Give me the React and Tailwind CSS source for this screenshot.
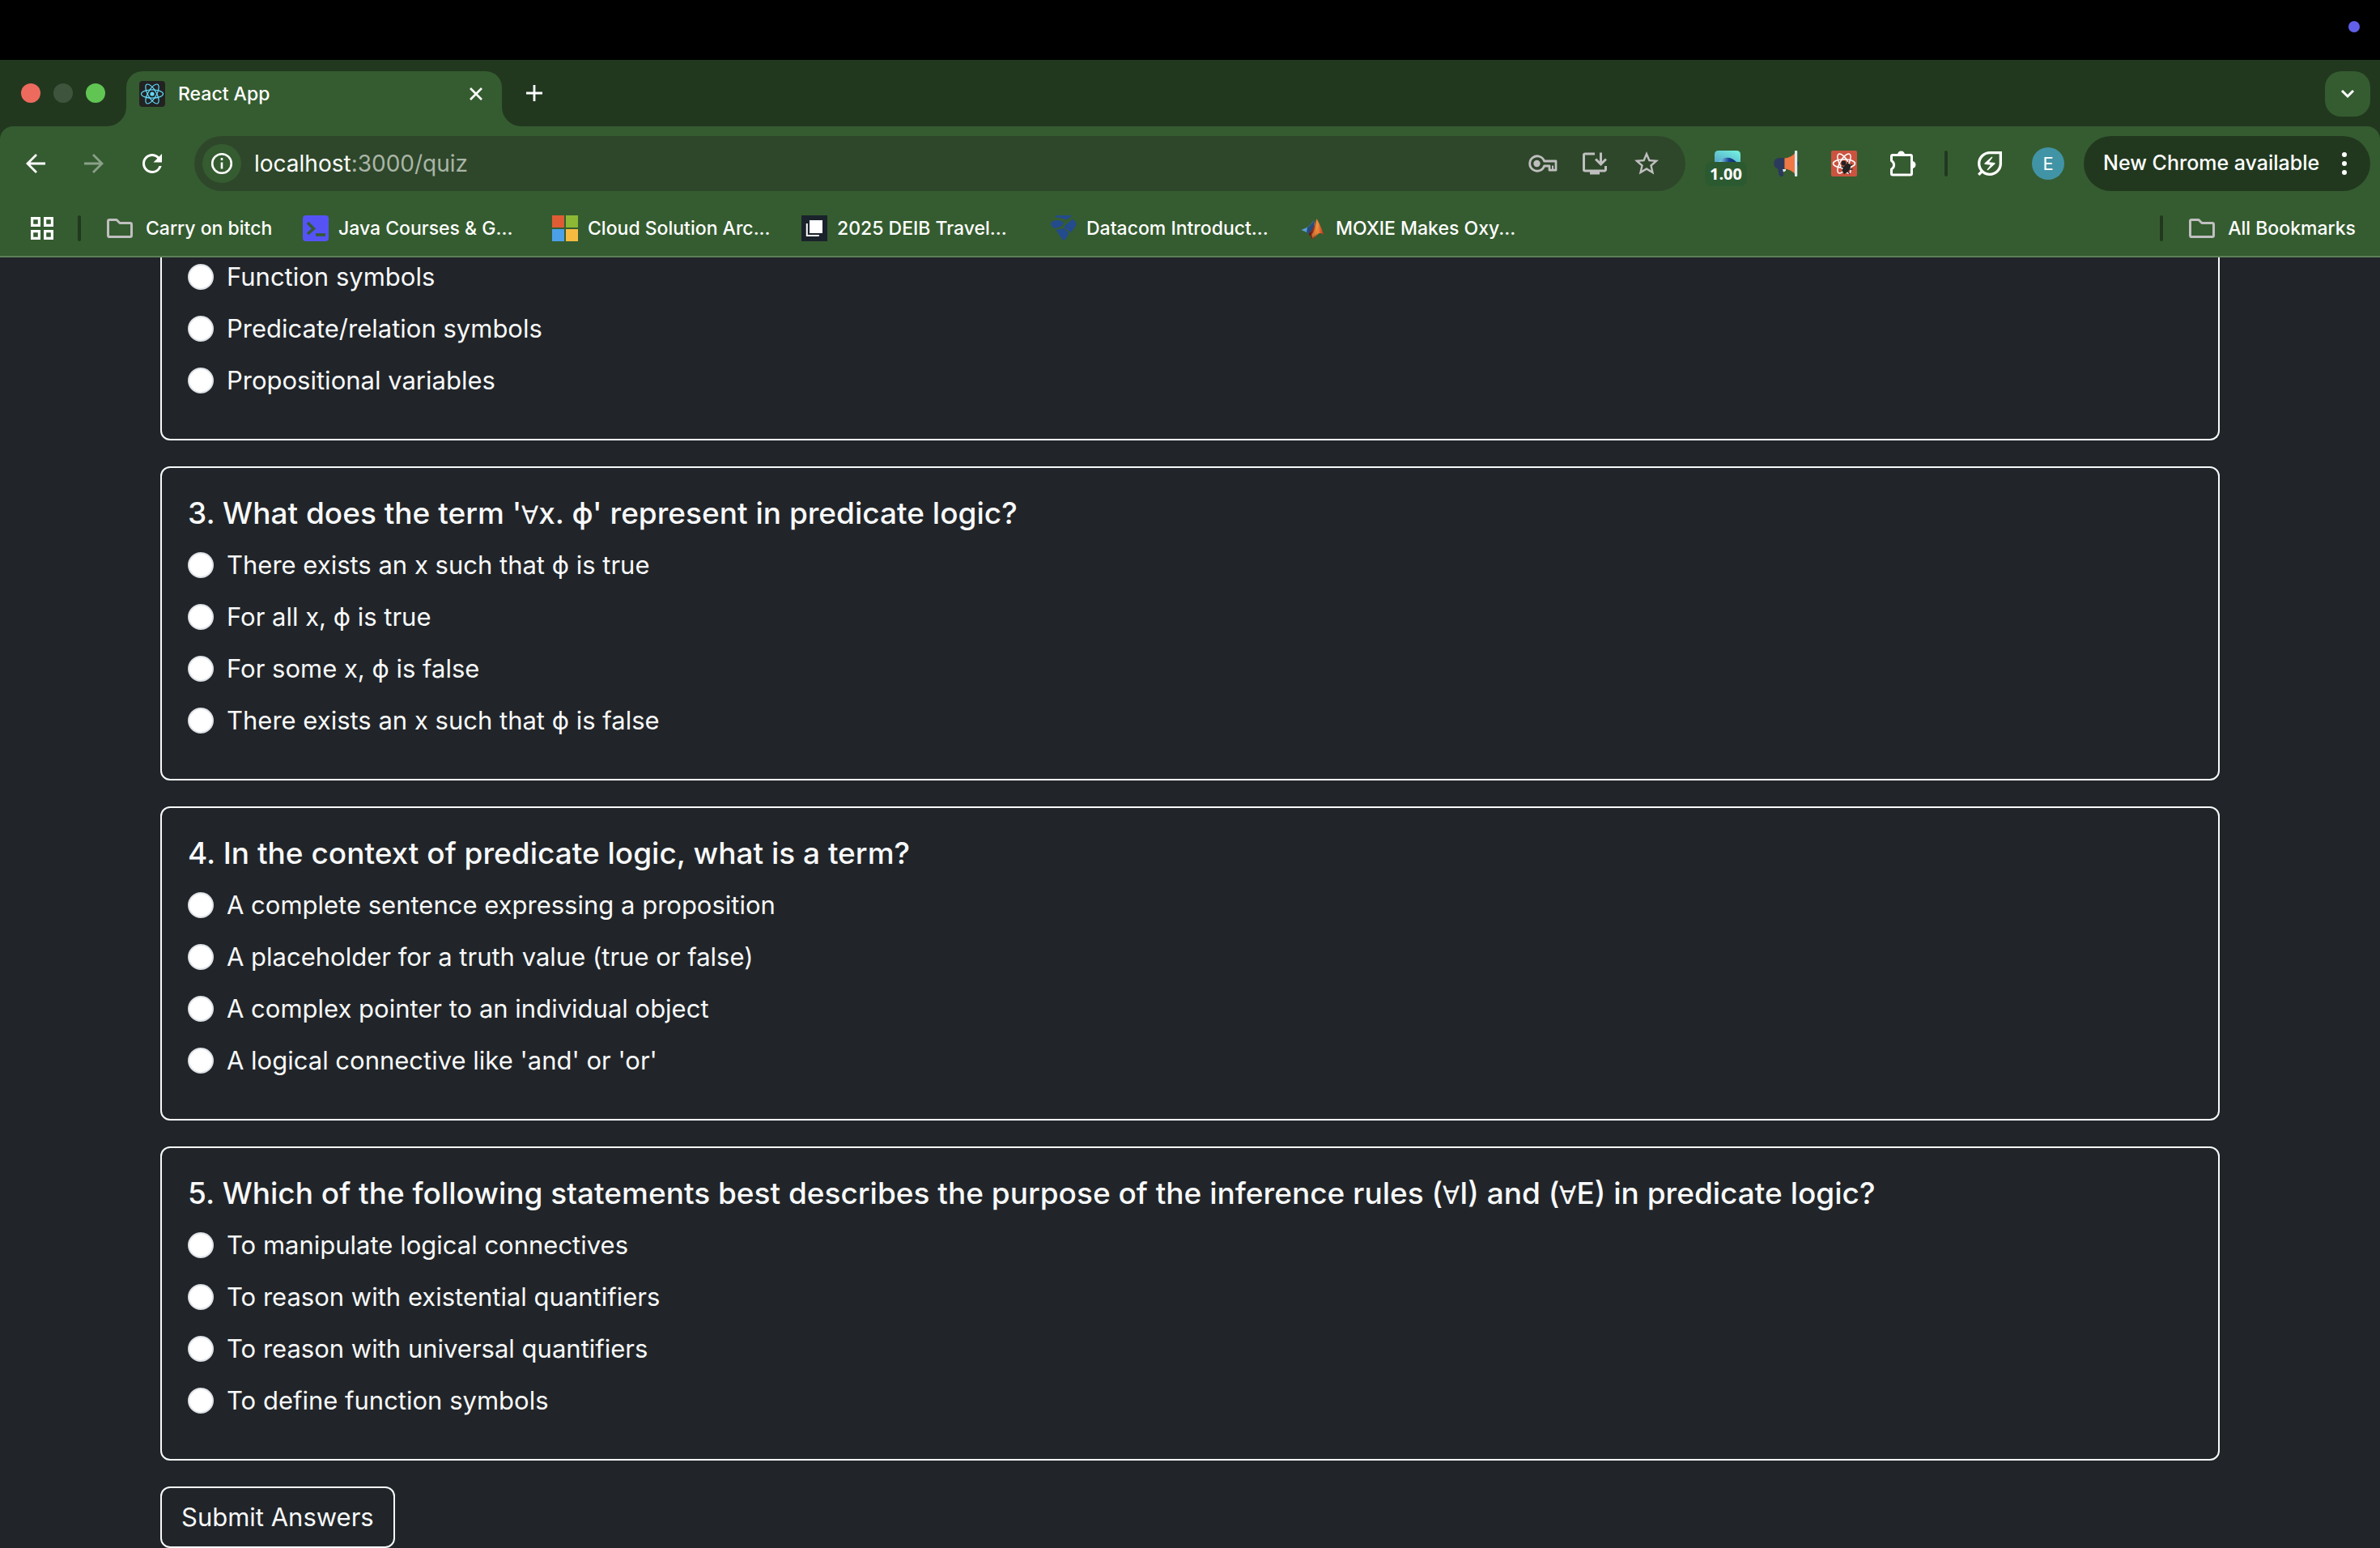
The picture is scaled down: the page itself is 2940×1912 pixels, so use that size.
import { MdRefresh, MdStarBorder, MdInstallDesktop, MdOutlineEnergySavingsLeaf } from "react-icons/md";

function ReactOrbits({ stroke, width }) {
  return (
    <g fill="none" stroke={stroke} strokeWidth={width}>
      <ellipse cx="16" cy="16" rx="13.5" ry="5.2" />
      <ellipse cx="16" cy="16" rx="13.5" ry="5.2" transform="rotate(60 16 16)" />
      <ellipse cx="16" cy="16" rx="13.5" ry="5.2" transform="rotate(120 16 16)" />
    </g>
  );
}

function ReactFavicon() {
  return (
    <svg viewBox="0 0 32 32" className="size-8 shrink-0">
      <rect width="32" height="32" rx="4" fill="#222222" />
      <ReactOrbits stroke="#61dafb" width="1.2" />
      <circle cx="16" cy="16" r="2.6" fill="#61dafb" />
    </svg>
  );
}

function ArrowIcon({ className }) {
  return (
    <svg viewBox="0 0 24 24" className={className} fill="none" stroke="currentColor" strokeWidth="2.8">
      <path d="M24 12H2M13 1L2 12l11 11" />
    </svg>
  );
}

function InfoIcon() {
  return (
    <svg viewBox="0 0 28 28" className="size-7" fill="none" stroke="currentColor" strokeWidth="2.6">
      <circle cx="14" cy="14" r="11.8" />
      <path d="M14 12.5v8M14 7v3" />
    </svg>
  );
}

function KeyIcon() {
  return (
    <svg viewBox="0 0 36 22" className="h-[22px] w-9" fill="none" stroke="currentColor" strokeWidth="2.8">
      <path d="M19.6 8H34v11.2h-8V14h-6.4a9.2 9.2 0 1 1 0-6z" strokeLinejoin="round" />
      <path d="M30 13.5V18" strokeWidth="2" />
      <circle cx="10.5" cy="11" r="4.2" fill="currentColor" stroke="none" />
    </svg>
  );
}

function FolderIcon() {
  return (
    <svg viewBox="0 0 32 24" className="h-6 w-8 shrink-0 text-[#c0bfc0]" fill="none" stroke="currentColor" strokeWidth="3" strokeLinejoin="round">
      <path d="M1.5 3.2Q1.5 1.5 3.2 1.5h8.8l4 4h12.8q1.7 0 1.7 1.7v13.6q0 1.7-1.7 1.7H3.2q-1.7 0-1.7-1.7z" />
    </svg>
  );
}

function AppsIcon() {
  return (
    <svg viewBox="0 0 28 28" className="size-7" fill="none" stroke="currentColor" strokeWidth="3.2">
      <path d="M1.6 1.6h8.8v8.8H1.6zM17.6 1.6h8.8v8.8h-8.8zM1.6 17.6h8.8v8.8H1.6zM17.6 17.6h8.8v8.8h-8.8z" />
    </svg>
  );
}

function PuzzleIcon() {
  return (
    <svg viewBox="0 0 34 34" className="size-[34px]">
      <path
        d="M5 6.5h22q1.5 0 1.5 1.5v21.5q0 1.5-1.5 1.5H5q-1.5 0-1.5-1.5v-5.5a6 6 0 0 0 0-10.5V8q0-1.5 1.5-1.5z"
        fill="none" stroke="currentColor" strokeWidth="3" strokeLinejoin="round"
      />
      <path d="M11 6a4.5 4.5 0 0 1 9 0zM29 14a4.5 4.5 0 0 1 0 9z" fill="currentColor" />
    </svg>
  );
}

function MegaphoneIcon() {
  return (
    <svg viewBox="0 0 32 32" className="size-8">
      <path d="M28 13q4 0 4 3t-4 3z" fill="#2b3a5c" />
      <path d="M14 9H7a7 7 0 0 0-1 13.5L7.5 30q.5 2 2.5 2h1.5q2 0 1.5-3l-.5-6H14z" fill="#2b3a5c" />
      <path d="M12 23h4v2l-3 1.5z" fill="#dfe9ef" />
      <path d="M14.5 9.5Q23 9 28 2v28q-5-7-13.5-7.5z" fill="#f07746" />
      <rect x="27" y="0" width="3.2" height="32" rx="1" fill="#dceaf2" />
    </svg>
  );
}

function ReactDebugIcon() {
  return (
    <svg viewBox="0 0 32 32" className="size-8">
      <rect width="32" height="32" rx="2" fill="#cb5340" />
      <ReactOrbits stroke="#ffffff" width="1.5" />
      <g fill="#222222" stroke="#222222" strokeWidth="1.3">
        <circle cx="15.5" cy="15.5" r="2.3" />
        <ellipse cx="19" cy="22" rx="3.4" ry="6" transform="rotate(35 19 22)" />
        <path d="M12.5 20l4 1M13.5 24.5l3-1M16 29l1.5-3M20 17l1-3M23 19.5l3-2.5M23 23l3.5 0M21 26l2 3" />
      </g>
    </svg>
  );
}

function SpeedIcon() {
  return (
    <svg viewBox="0 0 32 32" className="size-8">
      <defs>
        <linearGradient id="speed-sky" x1="0" y1="1" x2="1" y2="0">
          <stop offset="0" stopColor="#58a8cc" />
          <stop offset="1" stopColor="#74f5df" />
        </linearGradient>
        <linearGradient id="speed-eye" x1="0" y1="0" x2="1" y2="0">
          <stop offset="0" stopColor="#8fe3f4" />
          <stop offset=".6" stopColor="#16408c" />
          <stop offset="1" stopColor="#123070" />
        </linearGradient>
      </defs>
      <path d="M0 14V5q0-5 5-5h22q5 0 5 5v9z" fill="url(#speed-sky)" />
      <path d="M5 14q11-10.5 22 0z" fill="url(#speed-eye)" />
    </svg>
  );
}

function TerminalFavicon() {
  return (
    <svg viewBox="0 0 32 32" className="size-8 shrink-0">
      <rect width="32" height="32" rx="4" fill="#5553f6" />
      <path d="M6 9l7.5 7.5L6 23" fill="none" stroke="#345b30" strokeWidth="3.6" />
      <path d="M16 24h12" stroke="#345b30" strokeWidth="3.6" />
    </svg>
  );
}

function MicrosoftFavicon() {
  return (
    <svg viewBox="0 0 32 32" className="size-8 shrink-0">
      <rect width="15" height="15" fill="#e05c35" />
      <rect x="17" width="15" height="15" fill="#8cb836" />
      <rect y="17" width="15" height="15" fill="#4ba0e8" />
      <rect x="17" y="17" width="15" height="15" fill="#f5bb41" />
    </svg>
  );
}

function PagesFavicon() {
  return (
    <svg viewBox="0 0 32 32" className="size-8 shrink-0">
      <rect width="32" height="32" fill="#1a222b" />
      <rect x="10" y="6" width="16" height="16" fill="#ffffff" />
      <path d="M6.8 10v15h15" fill="none" stroke="#ffffff" strokeWidth="2" />
    </svg>
  );
}

function DatacomFavicon() {
  return (
    <svg viewBox="0 0 32 32" className="size-8 shrink-0" fill="#244b8c">
      <path d="M7 0h20l-7.5 5.5Q13 2.5 5.5 2.5z" />
      <path d="M1 8q8-4 15 .5 0 3-3 5l-7 2.5Q1 16 0 10z" />
      <path d="M17 13l10-8.5q5 3 4.5 8L25 21q-4-3.5-8-4.5z" />
      <path d="M6.5 18l8-2q6 2 8 6.5L18.5 29q-2.5 3-5 0z" />
    </svg>
  );
}

function MatlabFavicon() {
  return (
    <svg viewBox="0 0 32 32" className="size-8 shrink-0">
      <defs>
        <linearGradient id="peak" x1="0" y1="0" x2="1" y2="0">
          <stop offset="0" stopColor="#4a100e" />
          <stop offset=".35" stopColor="#a8341c" />
          <stop offset=".6" stopColor="#f08a3c" />
          <stop offset="1" stopColor="#b52a1c" />
        </linearGradient>
      </defs>
      <path d="M1.5 18l8-3.5Q14 11 17 6l1 6-7 11q-3-2.5-9.5-5z" fill="#5b9bd5" />
      <path d="M9 15q5-3 8-9l.5 8-6.5 9-3-2z" fill="#274b78" />
      <path d="M20.5 4Q25 12 29.5 24q-5-4-9 .5-4 5-6.5 4.5-.5-4-3.5-6 5.5-4 10-19z" fill="url(#peak)" />
      <path d="M20.5 5l1.5 8-2 10-5 5q0-3-1-4 5-6 6.5-19z" fill="#f3b04a" opacity=".5" />
    </svg>
  );
}

const BOOKMARKS = [
  { label: "Java Courses & G...", Icon: TerminalFavicon },
  { label: "Cloud Solution Arc...", Icon: MicrosoftFavicon },
  { label: "2025 DEIB Travel...", Icon: PagesFavicon },
  { label: "Datacom Introduct...", Icon: DatacomFavicon },
  { label: "MOXIE Makes Oxy...", Icon: MatlabFavicon },
];

const QUESTIONS = [
  {
    number: 3,
    text: "What does the term '∀x. ϕ' represent in predicate logic?",
    options: [
      "There exists an x such that ϕ is true",
      "For all x, ϕ is true",
      "For some x, ϕ is false",
      "There exists an x such that ϕ is false",
    ],
  },
  {
    number: 4,
    text: "In the context of predicate logic, what is a term?",
    options: [
      "A complete sentence expressing a proposition",
      "A placeholder for a truth value (true or false)",
      "A complex pointer to an individual object",
      "A logical connective like 'and' or 'or'",
    ],
  },
  {
    number: 5,
    text: "Which of the following statements best describes the purpose of the inference rules (∀I) and (∀E) in predicate logic?",
    options: [
      "To manipulate logical connectives",
      "To reason with existential quantifiers",
      "To reason with universal quantifiers",
      "To define function symbols",
    ],
  },
];

function TabStrip() {
  return (
    <div className="flex items-start bg-[#21381f] pt-[14px] pr-3 pl-[26px]">
      <div className="flex h-[54px] items-center gap-4">
        <button aria-label="Close window" className="size-6 rounded-full bg-[#ed6a5e]" />
        <button aria-label="Minimize window" className="size-6 rounded-full bg-[#3e543c]" />
        <button aria-label="Zoom window" className="size-6 rounded-full bg-[#61c554]" />
      </div>
      <div className="ml-[2px] size-6 self-end bg-[#355c30]">
        <div className="size-6 rounded-br-[24px] bg-[#21381f]" />
      </div>
      <div className="flex h-[68px] w-[464px] rounded-t-[20px] bg-[#355c30] px-4 pb-3">
        <div className="flex flex-1 items-center gap-4">
          <ReactFavicon />
          <span className="flex-1 text-[23px] font-medium">React App</span>
          <button aria-label="Close tab" className="flex size-8 items-center justify-center">
            <svg viewBox="0 0 16 16" className="size-4" stroke="currentColor" strokeWidth="2.6">
              <path d="M1 1l14 14M15 1L1 15" />
            </svg>
          </button>
        </div>
      </div>
      <div className="size-6 self-end bg-[#355c30]">
        <div className="size-6 rounded-bl-[24px] bg-[#21381f]" />
      </div>
      <button aria-label="New tab" className="flex h-[54px] w-8 items-center justify-center">
        <svg viewBox="0 0 22 22" className="size-[22px]" stroke="currentColor" strokeWidth="2.8">
          <path d="M11 1v20M1 11h20" />
        </svg>
      </button>
      <button aria-label="Search tabs" className="ml-auto flex size-14 items-center justify-center rounded-[20px] bg-[#355c30]">
        <svg viewBox="0 0 18 12" className="h-3 w-[18px]" fill="none" stroke="currentColor" strokeWidth="3">
          <path d="M2 2l7 7 7-7" />
        </svg>
      </button>
    </div>
  );
}

function ToolButton({ label, children }) {
  return (
    <button aria-label={label} className="relative flex h-[68px] w-[72px] shrink-0 items-center justify-center">
      {children}
    </button>
  );
}

function Toolbar() {
  return (
    <div className="flex items-center pt-3 pr-3 pb-3 pl-2">
      <ToolButton label="Back"><ArrowIcon className="size-6" /></ToolButton>
      <ToolButton label="Forward"><ArrowIcon className="size-6 rotate-180 text-[#8aa087]" /></ToolButton>
      <ToolButton label="Reload"><MdRefresh className="size-9" /></ToolButton>
      <div className="ml-4 flex h-[68px] flex-1 items-center rounded-full bg-[#2e472a] pr-4 pl-[10px]">
        <button aria-label="Site information" className="flex size-12 items-center justify-center rounded-full bg-[#355c30]">
          <InfoIcon />
        </button>
        <a href="#quiz" className="ml-4 flex-1 text-[28px] text-[#aab5a8]">
          <span className="text-white">localhost</span>:3000/quiz
        </a>
        <div className="flex items-center text-[#c0bfc0]">
          <button aria-label="Passwords" className="flex w-16 justify-center"><KeyIcon /></button>
          <button aria-label="Install app" className="flex w-16 justify-center"><MdInstallDesktop className="size-9" /></button>
          <button aria-label="Bookmark this page" className="flex w-16 justify-center"><MdStarBorder className="size-9" /></button>
        </div>
      </div>
      <div className="ml-4 flex items-center">
        <ToolButton label="Playback speed 1.00">
          <SpeedIcon />
          <span className="absolute top-8 left-2 flex h-[30px] w-[52px] items-center justify-center rounded-lg bg-[#2c5a30] font-['Open_Sans',sans-serif] text-[20px] font-bold">
            1.00
          </span>
        </ToolButton>
        <ToolButton label="Announcements"><MegaphoneIcon /></ToolButton>
        <ToolButton label="React developer tools"><ReactDebugIcon /></ToolButton>
        <ToolButton label="Extensions"><PuzzleIcon /></ToolButton>
        <div className="mx-4 h-8 w-1 rounded-full bg-[#21381f]" />
        <ToolButton label="Energy saver"><MdOutlineEnergySavingsLeaf className="size-10" /></ToolButton>
        <ToolButton label="Profile">
          <span className="flex size-10 items-center justify-center rounded-full bg-[#4194a6] text-[22px]">E</span>
        </ToolButton>
      </div>
      <button className="ml-2 flex h-[68px] w-[354px] items-center justify-between rounded-full bg-[#21381f] pr-[29px] pl-6 text-[25px] font-medium">
        New Chrome available
        <svg viewBox="0 0 6 30" className="h-[30px] w-[6px]" fill="currentColor">
          <circle cx="3" cy="4" r="3" />
          <circle cx="3" cy="15" r="3" />
          <circle cx="3" cy="26" r="3" />
        </svg>
      </button>
    </div>
  );
}

function BookmarksBar() {
  return (
    <nav className="flex h-[68px] items-center pr-[30px] pl-[38px] text-[23px] font-medium">
      <button aria-label="Apps"><AppsIcon /></button>
      <div className="ml-[30px] h-8 w-1 rounded-full bg-[#21381f]" />
      <a href="#folder" className="ml-8 flex w-[242px] items-center gap-4"><FolderIcon />Carry on bitch</a>
      {BOOKMARKS.map(({ label, Icon }) => (
        <a key={label} href="#bookmark" className="flex w-[308px] items-center gap-3"><Icon />{label}</a>
      ))}
      <div className="ml-auto h-8 w-1 rounded-full bg-[#21381f]" />
      <a href="#all" className="ml-8 flex items-center gap-4"><FolderIcon />All Bookmarks</a>
    </nav>
  );
}

function Option({ name, label }) {
  return (
    <label className="mb-4 flex items-center gap-4 text-[31px] leading-[48px]">
      <input type="radio" name={name} className="size-8 appearance-none rounded-full border-2 border-[#dee2e6] bg-white checked:border-8 checked:border-[#0d6efd]" />
      {label}
    </label>
  );
}

function QuestionTitle({ number, text }) {
  const parts = text.split("∀");
  return (
    <h5 className="mb-4 text-[37px] leading-[48px] font-medium">
      {number}. {parts.map((part, i) => (
        <span key={i}>{i > 0 && <span className="text-[31px] leading-none font-normal">∀</span>}{part}</span>
      ))}
    </h5>
  );
}

export default function App() {
  return (
    <div className="flex min-h-screen flex-col bg-[#212529] font-['Inter',sans-serif] text-white">
      <div className="flex h-[74px] justify-end bg-black pt-[26px] pr-[25px]">
        <div className="size-[14px] rounded-full bg-[#6260ea]" />
      </div>
      <header className="border-b-2 border-[#5d7f59] bg-[#21381f] whitespace-nowrap">
        <TabStrip />
        <div className="rounded-t-[16px] bg-[#355c30]">
          <Toolbar />
          <BookmarksBar />
        </div>
      </header>
      <main className="flex-1 px-[198px] text-[#f8f9fa]">
        <section className="mb-8 rounded-b-xl border-2 border-t-0 border-[#f8f9fa] px-8 pb-8">
          {["Function symbols", "Predicate/relation symbols", "Propositional variables"].map((label) => (
            <Option key={label} name="question-2" label={label} />
          ))}
        </section>
        {QUESTIONS.map(({ number, text, options }) => (
          <section key={number} className="mb-8 rounded-xl border-2 border-[#f8f9fa] p-8">
            <QuestionTitle number={number} text={text} />
            {options.map((label) => (
              <Option key={label} name={`question-${number}`} label={label} />
            ))}
          </section>
        ))}
        <button className="rounded-xl border-2 border-[#f8f9fa] px-6 py-3 text-[31px] leading-[48px]">Submit Answers</button>
      </main>
    </div>
  );
}
